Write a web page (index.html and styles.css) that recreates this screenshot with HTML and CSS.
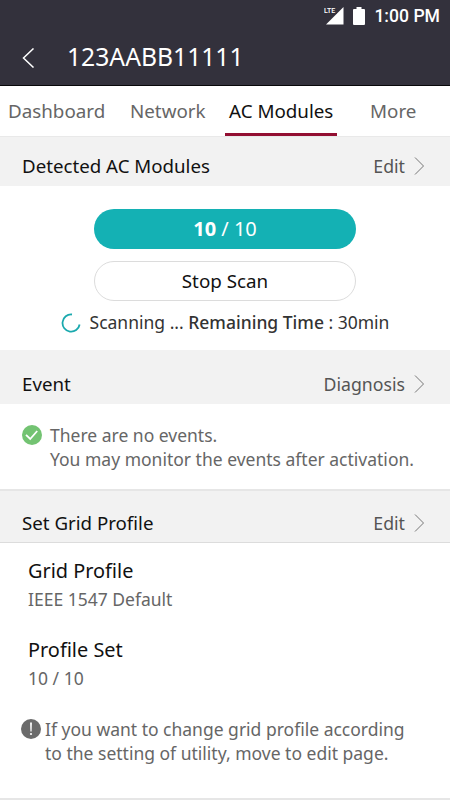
FILE: index.html
```html
<!DOCTYPE html>
<html lang="en">
<head>
  <meta charset="UTF-8">
  <meta name="viewport" content="width=device-width, initial-scale=1.0">
  <title>AC Modules</title>
  <link rel="stylesheet" href="styles.css">
</head>
<body>
  <header class="header">
    <div class="status-bar">
      <svg class="signal" width="20" height="18" viewBox="0 0 20 18">
        <path d="M19.500 0v17.500H2z" fill="#fff" />
        <path d="M0 0h13v6.500H0z" fill="#33313c" />
        <text x="0" y="6">LTE</text>
      </svg>
      <svg class="battery" width="12" height="18" viewBox="0 0 12 18">
        <path d="M3.500 0h5v2H11q1 0 1 1v14q0 1-1 1H1q-1 0-1-1V3q0-1 1-1h2.500z" fill="#fff" />
      </svg>
      <span class="clock">1:00 PM</span>
    </div>
    <div class="title-bar">
      <svg class="back" width="13" height="20" viewBox="0 0 13 20">
        <path d="M11.500 .5L1.500 10l10 9.500" fill="none" stroke="#fff" stroke-width="1.500" />
      </svg>
      <h1>123AABB11111</h1>
    </div>
  </header>

  <nav class="tabs">
    <a class="tab dashboard">Dashboard</a>
    <a class="tab network">Network</a>
    <a class="tab active">AC Modules</a>
    <a class="tab more">More</a>
  </nav>

  <main>
    <section class="modules">
      <div class="section-head">
        <h2>Detected AC Modules</h2>
        <a class="link">Edit
          <svg width="11" height="18" viewBox="0 0 11 18"><path d="M1 .5L9.500 9 1 17.500" /></svg>
        </a>
      </div>
      <div class="scan">
        <div class="progress"><span><b>10</b> / 10</span></div>
        <button class="stop">Stop Scan</button>
        <div class="scan-status">
          <svg width="20" height="20" viewBox="0 0 20 20">
            <path d="M11 1.500A8.600 8.600 0 1 0 18.600 11.500" fill="none" stroke="#1aa9ae" stroke-width="1.800" />
          </svg>
          <span>Scanning ... <em>Remaining Time</em> : 30min</span>
        </div>
      </div>
    </section>

    <section class="event">
      <div class="section-head">
        <h2>Event</h2>
        <a class="link">Diagnosis
          <svg width="11" height="18" viewBox="0 0 11 18"><path d="M1 .5L9.500 9 1 17.500" /></svg>
        </a>
      </div>
      <div class="event-body">
        <svg width="20" height="20" viewBox="0 0 20 20">
          <circle cx="10" cy="10" r="10" fill="#73c372" />
          <path d="M4 9.800l4.200 4.200 7-8" fill="none" stroke="#fff" stroke-width="1.800" />
        </svg>
        <p>There are no events.<br>You may monitor the events after activation.</p>
      </div>
    </section>

    <section class="grid-profile">
      <div class="section-head">
        <h2>Set Grid Profile</h2>
        <a class="link">Edit
          <svg width="11" height="18" viewBox="0 0 11 18"><path d="M1 .5L9.500 9 1 17.500" /></svg>
        </a>
      </div>
      <dl>
        <dt>Grid Profile</dt>
        <dd>IEEE 1547 Default</dd>
        <dt>Profile Set</dt>
        <dd>10 / 10</dd>
      </dl>
      <div class="note">
        <svg width="20" height="20" viewBox="0 0 20 20">
          <circle cx="10" cy="10" r="10" fill="#6b6b6b" />
          <path d="M9.100 3.500h1.800l-.3 9H9.400z" fill="#fff" />
          <circle cx="10" cy="15" r="1.100" fill="#fff" />
        </svg>
        <p>If you want to change grid profile according<br>to the setting of utility, move to edit page.</p>
      </div>
    </section>
  </main>
</body>
</html>
```
FILE: styles.css
```css
* {
  box-sizing: border-box;
}

body {
  margin: 0;
  height: 800px;
  overflow: hidden;
  background: #fff;
  color: #111;
  font-family: "Noto Sans", sans-serif;
}

h1, h2, p, dl, dd {
  margin: 0;
  font-weight: 400;
}

svg {
  flex: none;
}

.header {
  height: 86px;
  background: #33313c;
  border-bottom: 1px solid #08080a;
  color: #fff;
}

.status-bar {
  display: flex;
  align-items: center;
  justify-content: flex-end;
  height: 32px;
  padding-right: 10px;
}

.signal {
  margin-right: 9px;
}

.signal text {
  fill: #fff;
  font: 500 7px Roboto, sans-serif;
}

.battery {
  margin-right: 9px;
}

.clock {
  font: 500 17.6px Roboto, sans-serif;
}

.title-bar {
  display: flex;
  align-items: center;
  height: 52px;
  padding-left: 22px;
}

.title-bar h1 {
  margin: -2px 0 0 32px;
  font-size: 24.7px;
  line-height: 34px;
}

.tabs {
  display: flex;
  height: 50px;
  font-size: 18.8px;
  line-height: 50px;
  color: #666;
}

.dashboard {
  width: 130px;
  padding-left: 8px;
}

.network {
  width: 95px;
}

.active {
  width: 112px;
  padding-left: 4px;
  border-bottom: 3px solid #930f32;
  color: #111;
}

.more {
  padding-left: 33px;
}

.section-head {
  display: flex;
  align-items: center;
  justify-content: space-between;
  padding: 8px 25px 0 22px;
  background: #f2f2f2;
}

.section-head h2 {
  font-size: 18.7px;
  line-height: 26px;
}

.modules .section-head {
  height: 50px;
  border-top: 1px solid #e9e9e9;
}

.event .section-head {
  height: 54px;
  padding-top: 13px;
}

.grid-profile .section-head {
  height: 54px;
  padding-top: 13px;
  border-top: 2px solid #e6e6e6;
  border-bottom: 1px solid #dcdcdc;
}

.link {
  display: flex;
  align-items: center;
  gap: 9px;
  color: #555;
  font-size: 17.7px;
  line-height: 26px;
}

.link path {
  fill: none;
  stroke: #777;
  stroke-width: 1;
}

.scan {
  display: flex;
  flex-direction: column;
  align-items: center;
  height: 164px;
  padding-top: 23px;
}

.progress,
.stop {
  width: 262px;
  height: 40px;
  border-radius: 20px;
  text-align: center;
}

.progress {
  background: #14b1b4;
  color: #fff;
  font-size: 20px;
  line-height: 40px;
}

.stop {
  margin-top: 12px;
  padding: 0;
  border: 1px solid #dcdcdc;
  background: #fff;
  color: #111;
  font: 18.8px/38px "Noto Sans", sans-serif;
}

.scan-status {
  display: flex;
  align-items: center;
  gap: 9px;
  margin-top: 9px;
  color: #333;
  font-size: 17.5px;
  line-height: 26px;
}

.scan-status span {
  margin-top: -1px;
}

.scan-status em {
  font-style: normal;
  font-weight: 500;
}

.event-body {
  display: flex;
  height: 85px;
  padding: 19px 0 0 22px;
  color: #666;
}

.event-body svg {
  margin: 2px 8px 0 0;
}

.event-body p,
.note p {
  font-size: 17.5px;
  line-height: 24px;
  white-space: nowrap;
}

dl {
  padding: 14px 0 0 28px;
  height: 174px;
}

dt {
  font-size: 19.9px;
  line-height: 28px;
}

dd {
  margin-bottom: 22px;
  color: #666;
  font-size: 17.5px;
  line-height: 29px;
}

.note {
  display: flex;
  height: 83px;
  border-bottom: 2px solid #e6e6e6;
  padding-left: 21px;
  color: #666;
}

.note svg {
  margin: 2px 4px 0 0;
}
```
